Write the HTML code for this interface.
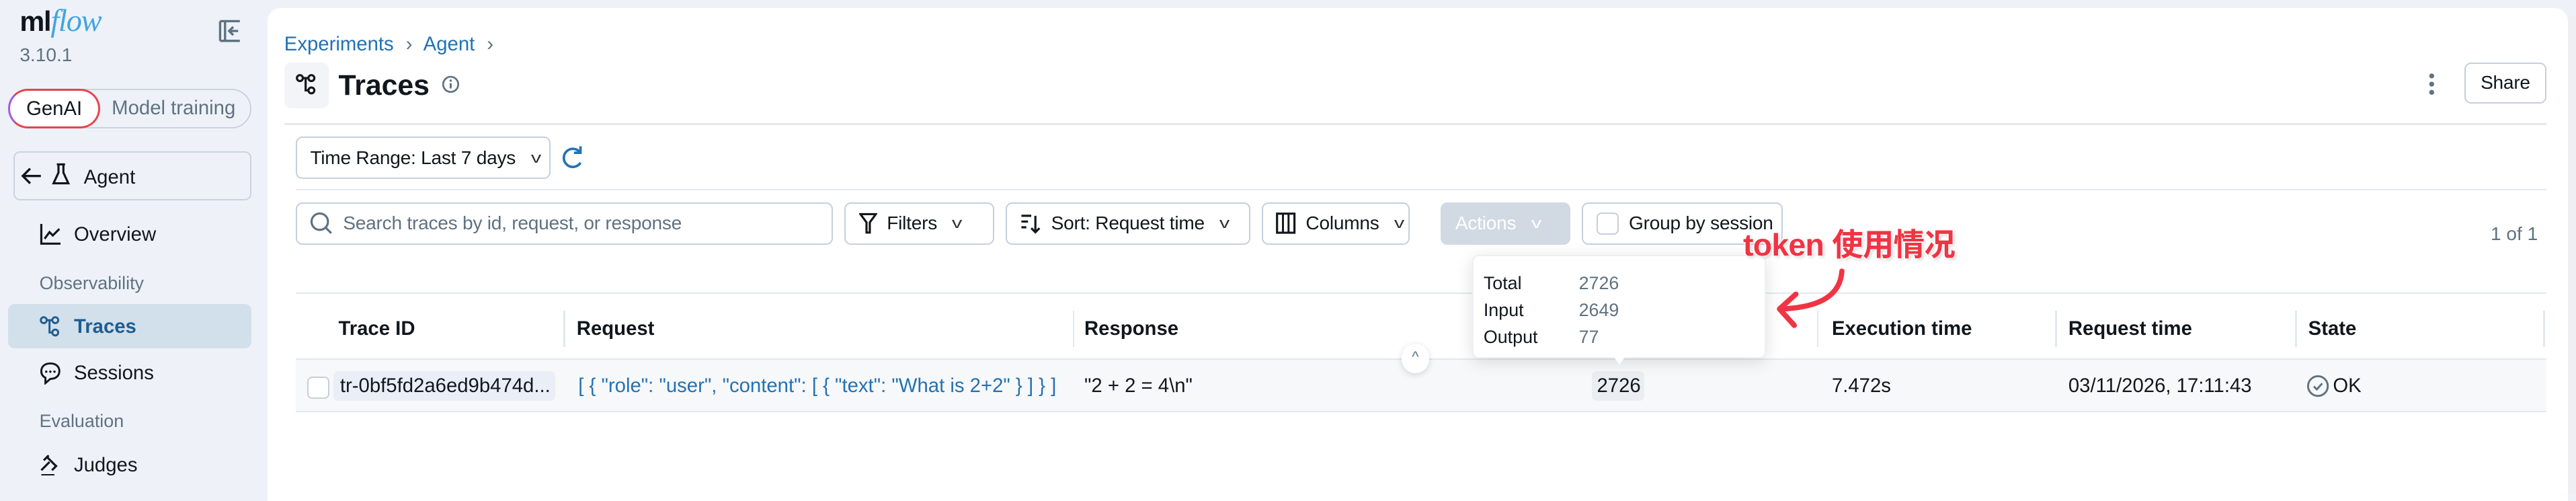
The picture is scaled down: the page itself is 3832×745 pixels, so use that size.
<!DOCTYPE html>
<html><head><meta charset="utf-8"><style>
html,body{margin:0;padding:0;}
body{width:3832px;height:732px;overflow:hidden;background:#eef2f8;}
#r{zoom:2.4439;width:1568px;height:300px;position:relative;font-family:"Liberation Sans","Noto Sans CJK SC",sans-serif;font-size:12px;color:#11171c;}
.a{position:absolute;white-space:nowrap;}
svg{flex-shrink:0;}
.btn{position:absolute;border:1px solid #c5cfdb;border-radius:4px;background:#fff;box-sizing:border-box;height:26px;display:flex;align-items:center;padding:0 8px;font-size:11.5px;gap:6px;white-space:nowrap;letter-spacing:-0.1px;overflow:hidden;}
.chev{font-size:9px;color:#333;margin-left:4px;transform:scaleX(1.4);}
.th{position:absolute;top:193px;font-weight:bold;font-size:12px;}
.sep{position:absolute;top:189px;width:1px;height:22px;background:#e3e8ee;}
.nav{position:absolute;left:24px;font-size:12px;display:flex;align-items:center;gap:8px;}
.sec{position:absolute;left:24px;font-size:11px;color:#5f7281;}
</style></head><body><div id="r">
<!-- sidebar -->
<div class="a" style="left:12px;top:2px;font-size:17px;font-weight:bold;letter-spacing:-0.5px;">ml<span style="color:#43a4e0;font-style:italic;font-weight:normal;font-family:'Liberation Serif',serif;font-size:19px;">flow</span></div>
<div class="a" style="left:12px;top:27px;font-size:11.5px;color:#5f7281;">3.10.1</div>
<svg class="a" style="left:133px;top:12px" width="14" height="14" viewBox="0 0 14 14"><path d="M1 1h12M1 13h12M1 1v12M4 1v12" stroke="#5f7281" stroke-width="1.4" fill="none"/><path d="M12 7H7M9 4.5 6.5 7 9 9.5" stroke="#5f7281" stroke-width="1.4" fill="none"/></svg>
<div class="a" style="left:5px;top:54px;width:148px;height:24px;border:1px solid #c9d3de;border-radius:13px;box-sizing:border-box;"></div>
<div class="a" style="left:5px;top:54px;width:56px;height:24px;border:1.3px solid #e9434f;border-left-color:#a55be0;border-radius:13px;box-sizing:border-box;background:#fff;text-align:center;line-height:22px;">GenAI</div>
<div class="a" style="left:68px;top:59px;color:#5f7281;">Model training</div>
<div class="a" style="left:8px;top:92px;width:145px;height:30px;border:1px solid #c9d3de;border-radius:4px;box-sizing:border-box;"></div>
<svg class="a" style="left:12px;top:101px" width="14" height="12" viewBox="0 0 14 12"><path d="M13 6H2M6.5 1.5 2 6l4.5 4.5" stroke="#11171c" stroke-width="1.4" fill="none"/></svg>
<svg class="a" style="left:31px;top:99px" width="12" height="14" viewBox="0 0 12 14"><path d="M3.5 1h5M4.5 1v5L1.5 12.5h9L7.5 6V1" stroke="#11171c" stroke-width="1.3" fill="none"/></svg>
<div class="a" style="left:51px;top:101px;font-size:12px;">Agent</div>
<div class="nav" style="top:136px;"><svg width="13" height="13" viewBox="0 0 13 13"><path d="M1 0v12h12M3 9l3-4 2 2 4-4" stroke="#11171c" stroke-width="1.3" fill="none"/></svg>Overview</div>
<div class="sec" style="top:166px;">Observability</div>
<div class="a" style="left:5px;top:185px;width:148px;height:27px;background:#d2e0ec;border-radius:4px;"></div>
<div class="nav" style="top:192px;color:#1f5d8f;font-weight:bold;"><svg width="13" height="13" viewBox="0 0 13 13"><circle cx="2.5" cy="2.5" r="1.8" stroke="#1f5d8f" fill="none" stroke-width="1.2"/><circle cx="9.5" cy="2.5" r="1.8" stroke="#1f5d8f" fill="none" stroke-width="1.2"/><circle cx="9.5" cy="10" r="1.8" stroke="#1f5d8f" fill="none" stroke-width="1.2"/><path d="M4.3 2.5h3.4M6 2.5v7.5h1.7" stroke="#1f5d8f" fill="none" stroke-width="1.2"/></svg>Traces</div>
<div class="nav" style="top:220px;"><svg width="13" height="14" viewBox="0 0 13 14"><path d="M6.5 1C3 1 1 3 1 5.7c0 2 1 3.3 2.5 4V13l3-2.6c3.5 0 5.5-2 5.5-4.7S10 1 6.5 1z" stroke="#11171c" fill="none" stroke-width="1.2"/><circle cx="4" cy="6" r=".7"/><circle cx="6.5" cy="6" r=".7"/><circle cx="9" cy="6" r=".7"/></svg>Sessions</div>
<div class="sec" style="top:250px;">Evaluation</div>
<div class="nav" style="top:276px;"><svg width="13" height="13" viewBox="0 0 13 13"><path d="M4 1l6 6M2.5 3.5l3-3M7.5 9.5l3-3M6 4.5l-5 5M1 12.5h8" stroke="#11171c" fill="none" stroke-width="1.3"/></svg>Judges</div>
<!-- main panel -->
<div class="a" style="left:163px;top:5px;width:1400px;height:300px;background:#fff;border-radius:8px 8px 0 0;"></div>
<div class="a" style="left:1563px;top:10px;width:5px;height:290px;background:#efeff1;"></div>
<div class="a" style="left:173px;top:20px;color:#2272b4;font-size:12px;">Experiments <span style="color:#5f7281;margin:0 4px;">›</span> Agent <span style="color:#5f7281;margin-left:4px;">›</span></div>
<div class="a" style="left:173px;top:38px;width:27px;height:28px;background:#f2f4f7;border-radius:4px;"></div>
<svg class="a" style="left:180px;top:45px" width="13" height="13" viewBox="0 0 13 13"><circle cx="2.5" cy="2.5" r="1.8" stroke="#11171c" fill="none" stroke-width="1.3"/><circle cx="9.5" cy="2.5" r="1.8" stroke="#11171c" fill="none" stroke-width="1.3"/><circle cx="9.5" cy="10" r="1.8" stroke="#11171c" fill="none" stroke-width="1.3"/><path d="M4.3 2.5h3.4M6 2.5v7.5h1.7" stroke="#11171c" fill="none" stroke-width="1.3"/></svg>
<div class="a" style="left:206px;top:42px;font-size:17.5px;font-weight:bold;">Traces</div>
<svg class="a" style="left:269px;top:46px" width="11" height="11" viewBox="0 0 11 11"><circle cx="5.5" cy="5.5" r="4.6" stroke="#5f7281" fill="none" stroke-width="1.1"/><path d="M5.5 4.8v3.2" stroke="#5f7281" stroke-width="1.2"/><circle cx="5.5" cy="3.2" r=".7" fill="#5f7281"/></svg>
<svg class="a" style="left:1477px;top:44px" width="6" height="14"><circle cx="3" cy="2" r="1.5" fill="#5f7281"/><circle cx="3" cy="7" r="1.5" fill="#5f7281"/><circle cx="3" cy="12" r="1.5" fill="#5f7281"/></svg>
<div class="btn" style="left:1500px;top:38px;width:50px;height:25px;justify-content:center;">Share</div>
<div class="a" style="left:173px;top:75px;width:1377px;height:1px;background:#e3e8ee;"></div>
<div class="btn" style="left:180px;top:83px;width:155px;justify-content:space-between;"><span>Time Range: Last 7 days</span><span class="chev">v</span></div>
<svg class="a" style="left:341px;top:88px" width="15" height="16" viewBox="0 0 15 16"><path d="M12 4.5A5.5 5.5 0 1 0 12.5 11" stroke="#2272b4" stroke-width="1.5" fill="none"/><path d="M12.5 1v4h-4" stroke="#2272b4" stroke-width="1.5" fill="none"/></svg>
<div class="a" style="left:180px;top:115px;width:1370px;height:1px;background:#e3e8ee;"></div>
<div class="btn" style="left:180px;top:123px;width:327px;color:#5f7281;"><svg width="14" height="14" viewBox="0 0 14 14"><circle cx="6" cy="6" r="5" stroke="#5f7281" fill="none" stroke-width="1.3"/><path d="M9.5 9.5l3.5 3.5" stroke="#5f7281" stroke-width="1.3"/></svg>Search traces by id, request, or response</div>
<div class="btn" style="left:514px;top:123px;width:91px;"><svg width="11" height="13" viewBox="0 0 11 13"><path d="M.8 1h9.4L6.5 6v6.2H4.5V6z" stroke="#11171c" fill="none" stroke-width="1.3"/></svg>Filters <span class="chev">v</span></div>
<div class="btn" style="left:612px;top:123px;width:149px;"><svg width="13" height="13" viewBox="0 0 13 13"><path d="M1 2h6M1 5.5h4M1 9h3M9.5 2v10M7 9.5l2.5 2.5 2.5-2.5" stroke="#11171c" fill="none" stroke-width="1.3"/></svg>Sort: Request time <span class="chev">v</span></div>
<div class="btn" style="left:768px;top:123px;width:90px;"><svg width="12" height="13" viewBox="0 0 12 13"><rect x=".7" y=".7" width="10.6" height="11.6" stroke="#11171c" fill="none" stroke-width="1.3"/><path d="M4.3 1v11M7.7 1v11" stroke="#11171c" stroke-width="1.2"/></svg>Columns <span class="chev">v</span></div>
<div class="btn" style="left:877px;top:123px;width:79px;background:#d1d9e2;border-color:#d1d9e2;color:#fff;">Actions <span class="chev" style="color:#fff;">v</span></div>
<div class="btn" style="left:963px;top:123px;width:122px;"><span style="display:inline-block;width:12px;height:12px;border:1px solid #c5cfdb;border-radius:3px;flex-shrink:0;"></span>Group by session</div>
<div class="a" style="left:1516px;top:136px;color:#5f7281;font-size:11.5px;">1 of 1</div>
<!-- table -->
<div class="a" style="left:180px;top:178px;width:1370px;height:1px;background:#e3e8ee;"></div>
<div class="th" style="left:206px;">Trace ID</div>
<div class="sep" style="left:343px;"></div><div class="th" style="left:351px;">Request</div>
<div class="sep" style="left:653px;"></div><div class="th" style="left:660px;">Response</div>
<div class="sep" style="left:1106px;"></div><div class="th" style="left:1115px;">Execution time</div>
<div class="sep" style="left:1251px;"></div><div class="th" style="left:1259px;">Request time</div>
<div class="sep" style="left:1397px;"></div><div class="th" style="left:1405px;">State</div>
<div class="sep" style="left:1548px;"></div>
<div class="a" style="left:180px;top:218px;width:1370px;height:33px;background:#f7f8fa;border-top:1px solid #e3e8ee;border-bottom:1px solid #e3e8ee;box-sizing:border-box;"></div>
<div class="a" style="left:187px;top:229px;width:12px;height:12px;border:1px solid #c5cfdb;border-radius:3px;background:#fff;"></div>
<div class="a" style="left:203px;top:226px;width:135px;height:18px;background:#eaeef6;border-radius:3px;"></div>
<div class="a" style="left:207px;top:228px;">tr-0bf5fd2a6ed9b474d...</div>
<div class="a" style="left:352px;top:228px;color:#2272b4;">[ { "role": "user", "content": [ { "text": "What is 2+2" } ] } ]</div>
<div class="a" style="left:660px;top:228px;">"2 + 2 = 4\n"</div>
<div class="a" style="left:969px;top:226px;width:32px;height:18px;background:#eaeef2;border-radius:3px;"></div>
<div class="a" style="left:972px;top:228px;">2726</div>
<div class="a" style="left:1115px;top:228px;">7.472s</div>
<div class="a" style="left:1259px;top:228px;">03/11/2026, 17:11:43</div>
<svg class="a" style="left:1404px;top:228px" width="14" height="14" viewBox="0 0 14 14"><circle cx="7" cy="7" r="6" stroke="#5f7281" fill="none" stroke-width="1.2"/><path d="M4.5 7.2l1.8 1.8 3.3-3.6" stroke="#5f7281" fill="none" stroke-width="1.2"/></svg>
<div class="a" style="left:1420px;top:228px;">OK</div>
<div class="a" style="left:853px;top:209px;width:17px;height:18px;border-radius:9px;background:#fff;box-shadow:0 1px 4px rgba(0,0,0,.15);text-align:center;font-size:9px;color:#5f7281;line-height:16px;">^</div>
<!-- popup -->
<div class="a" style="left:896px;top:155px;width:179px;height:63px;background:#fff;border-radius:4px;box-shadow:0 2px 10px rgba(0,0,0,.13);border:1px solid #eef0f3;box-sizing:border-box;"></div>
<div class="a" style="left:982px;top:217px;width:0;height:0;border-left:4px solid transparent;border-right:4px solid transparent;border-top:5px solid #fff;"></div>
<div class="a" style="left:903px;top:164px;font-size:11px;line-height:16.5px;">Total<br>Input<br>Output</div>
<div class="a" style="left:961px;top:164px;font-size:11px;line-height:16.5px;color:#5f7281;">2726<br>2649<br>77</div>
<!-- annotation -->
<div class="a" style="left:1061px;top:134px;font-size:19px;font-weight:bold;color:#f03444;text-shadow:0 0 2px #fff,0 0 2px #fff,1px 1px 2px rgba(0,0,0,.2);letter-spacing:-0.3px;">token 使用情况</div>
<svg class="a" style="left:1076px;top:160px" width="52" height="45" viewBox="0 0 52 45"><path d="M45 5C44 19 33 27 8 28" stroke="#f03444" stroke-width="3.2" fill="none" stroke-linecap="round"/><path d="M17 19L7 28l9 10" stroke="#f03444" stroke-width="3.2" fill="none" stroke-linecap="round" stroke-linejoin="round"/></svg>
</div></body></html>
